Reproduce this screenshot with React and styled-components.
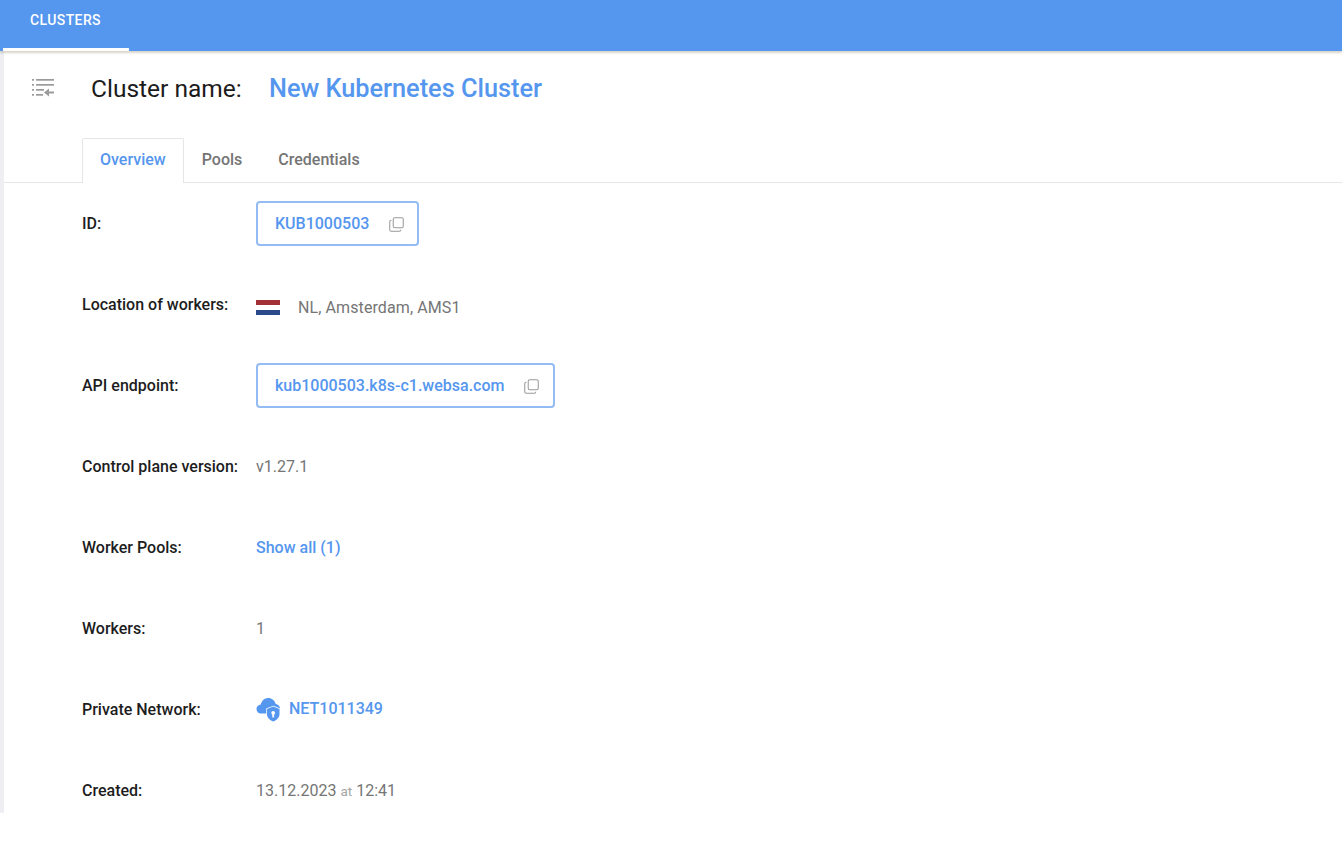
import React from "react";
import styled, { createGlobalStyle } from "styled-components";

const Global = createGlobalStyle`
  html, body { margin: 0; padding: 0; background: #fff; }
  body { font-family: Roboto, "Liberation Sans", sans-serif; font-size: 16px; color: #1c1c1c; }
  * { box-sizing: border-box; }
`;
const Page = styled.div`
  width: 1342px; height: 862px; overflow: hidden; display: flex; flex-direction: column;
`;
const TopBar = styled.header`
  height: 51px; flex: none; background: #5596ee; padding-left: 3px; display: flex;
  box-shadow: 0 2px 2px rgba(150, 135, 105, .35); position: relative; z-index: 1;
`;
const TopTab = styled.div`
  width: 126px; height: 51px; border-bottom: 3px solid #fff; color: #fff;
  font-size: 14px; font-weight: 500; letter-spacing: .4px; padding: 12px 0 0 27px; line-height: 16px;
`;
const Main = styled.main`
  height: 762px; flex: none; border-left: 4px solid #eeeef3; background: #fff;
`;
const TitleRow = styled.div`
  height: 87px; display: flex; align-items: flex-start; padding: 23px 0 0 27px;
`;
const MenuIcon = styled.svg`
  width: 24px; height: 24px; flex: none; margin-right: 36px; margin-top: 2px; color: #9b9b9b;
`;
const TitleLabel = styled.span`
  font-size: 24.5px; line-height: 30px; color: #1b1b1b; width: 178px; flex: none;
`;
const TitleValue = styled.span`
  font-size: 25.3px; line-height: 30px; font-weight: 500; color: #5596ee;
`;
const Tabs = styled.nav`
  height: 45px; display: flex; padding-left: 78px; border-bottom: 1px solid #e6e6e6;
`;
const Tab = styled.div`
  height: ${p => (p.$active ? "45px" : "44px")}; padding: 1px 18px 0; line-height: 42px; font-weight: 500;
  color: ${p => (p.$active ? "#5596ee" : "#757575")}; background: #fff;
  ${p => p.$active ? "border: 1px solid #e6e6e6; border-bottom: none; border-radius: 2px 2px 0 0; padding: 0 17px;" : ""}
`;
const Rows = styled.div`
  display: flex; flex-direction: column; padding: 0 0 0 78px;
`;
const Row = styled.div`
  height: 81px; display: flex; align-items: flex-start; padding-top: 31px;
`;
const Label = styled.div`
  width: 174px; flex: none; font-weight: 500; line-height: 19px; color: #1d1d1d;
`;
const Text = styled.span`
  line-height: 19px; color: #757575; font-weight: 400; margin-top: ${p => p.$drop ?? 0}px;
  letter-spacing: ${p => p.$track ?? 0}px;
`;
const Small = styled.span`
  font-size: 13.5px; color: #a5a5a5; margin: 0 4px;
`;
const LinkText = styled.span`
  line-height: 19px; color: #5596ee; font-weight: 500; margin-top: ${p => p.$drop ?? 0}px;
`;
const CopyBox = styled.div`
  height: 45px; display: flex; align-items: center; gap: 20px; margin-top: -13px;
  border: 2px solid #93bbf4; border-radius: 4px; padding: 0 ${p => p.$right ?? 13}px 0 17px;
  color: #5596ee; font-weight: 500;
`;
const CopyIcon = styled.svg`
  width: 15px; height: 15px; flex: none; color: #999; margin-top: 1px;
`;
const FlagBox = styled.svg`
  width: 24px; height: 15px; flex: none; margin: 5px 18px 0 0;
`;
const Inline = styled.div`
  display: flex; align-items: flex-start;
`;
const CloudIcon = styled.svg`
  width: 25px; height: 25px; flex: none; margin: -3px 8px 0 0; color: #5596ee;
`;

const Copy = () => (
  <CopyIcon viewBox="0 0 16 16" fill="none" stroke="currentColor" strokeWidth="1.1">
    <rect x="4.5" y=".8" width="10.7" height="10.7" rx="1.6" />
    <path d="M2.6 3.4 H2.3 A1.6 1.6 0 0 0 .8 5 V13.6 A1.6 1.6 0 0 0 2.4 15.2 H11 A1.6 1.6 0 0 0 12.6 13.6" />
  </CopyIcon>
);

export default function App() {
  return (
    <Page>
      <Global />
      <TopBar><TopTab>CLUSTERS</TopTab></TopBar>
      <Main>
        <TitleRow>
          <MenuIcon viewBox="0 0 24 24" fill="currentColor">
            <rect x="1" y="3" width="2" height="1.7" /><rect x="5" y="3" width="18" height="1.7" />
            <rect x="1" y="8" width="2" height="1.7" /><rect x="5" y="8" width="18" height="1.7" />
            <rect x="1" y="13" width="2" height="1.7" /><rect x="5" y="13" width="8" height="1.7" />
            <rect x="1" y="18" width="2" height="1.7" /><rect x="5" y="18" width="7" height="1.7" />
            <path d="M13 16.5 L18 12.5 V15.5 H23 V17.5 H18 V20.5 Z" />
          </MenuIcon>
          <TitleLabel>Cluster name:</TitleLabel>
          <TitleValue>New Kubernetes Cluster</TitleValue>
        </TitleRow>
        <Tabs>
          <Tab $active>Overview</Tab>
          <Tab>Pools</Tab>
          <Tab>Credentials</Tab>
        </Tabs>
        <Rows>
          <Row>
            <Label>ID:</Label>
            <CopyBox>KUB1000503<Copy /></CopyBox>
          </Row>
          <Row>
            <Label>Location of workers:</Label>
            <Inline>
              <FlagBox viewBox="0 0 24 15">
                <rect width="24" height="5" fill="#a23034" />
                <rect y="5" width="24" height="5" fill="#fff" />
                <rect y="10" width="24" height="5" fill="#2a4a8c" />
              </FlagBox>
              <Text $drop={3} $track={0.1}>NL, Amsterdam, AMS1</Text>
            </Inline>
          </Row>
          <Row>
            <Label>API endpoint:</Label>
            <CopyBox $right={14}>kub1000503.k8s-c1.websa.com<Copy /></CopyBox>
          </Row>
          <Row>
            <Label>Control plane version:</Label>
            <Text>v1.27.1</Text>
          </Row>
          <Row>
            <Label>Worker Pools:</Label>
            <LinkText>Show all (1)</LinkText>
          </Row>
          <Row>
            <Label>Workers:</Label>
            <Text>1</Text>
          </Row>
          <Row>
            <Label>Private Network:</Label>
            <Inline>
              <CloudIcon viewBox="0 0 25 25" fill="currentColor">
                <path d="M5 16.5 C2.2 16.5 .5 14.5 .5 12 C.5 9.6 2.3 7.8 4.7 7.6 C5.6 3.8 8.6 1 12.2 1 C15.8 1 18.8 3.5 19.7 7 C22 7.3 24 9 24 11.5 C24 14 22 16.5 19 16.5 Z" />
                <path d="M17.2 9.5 L23.5 12 V17 C23.5 20.6 20.8 23.2 17.2 24.5 C13.6 23.2 10.9 20.6 10.9 17 V12 Z" stroke="#fff" strokeWidth="1.5" paintOrder="stroke" />
                <circle cx="17.2" cy="15.8" r="1.9" fill="#fff" />
                <rect x="16.3" y="16.5" width="1.8" height="4" fill="#fff" />
              </CloudIcon>
              <LinkText $drop={-1}>NET1011349</LinkText>
            </Inline>
          </Row>
          <Row>
            <Label>Created:</Label>
            <Text>13.12.2023<Small>at</Small>12:41</Text>
          </Row>
        </Rows>
      </Main>
    </Page>
  );
}
